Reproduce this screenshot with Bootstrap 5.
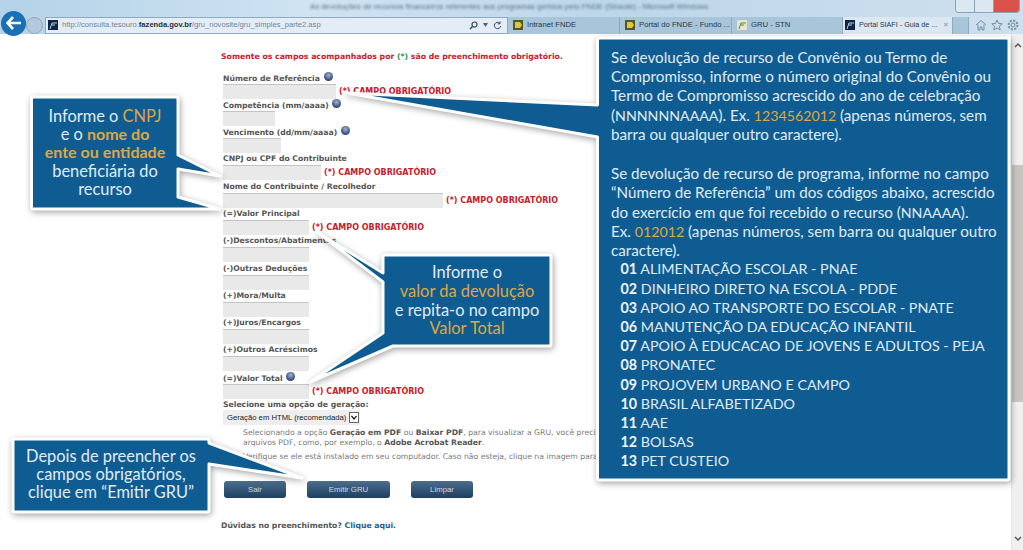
<!DOCTYPE html>
<html lang="pt-BR">
<head>
  <meta charset="UTF-8" />
  <meta name="viewport" content="width=device-width, initial-scale=1" />
  <title>GRU - Guia de preenchimento</title>
  <link href="https://cdn.jsdelivr.net/npm/bootstrap@5.3.3/dist/css/bootstrap.min.css" rel="stylesheet" />
  <style>
    html, body {
      height: 550px;
      overflow: hidden;
      background: #fff;
    }

    /* browser chrome */
    .ie-chrome {
      height: 34px;
      background: linear-gradient(to right, #b4d2e8, #cfe3f2 30%, #bcd6ea 60%, #cfe0ee);
      font-family: "Liberation Sans", sans-serif;
    }

    .ie-title { height: 16px; }

    .ie-title-text {
      margin-left: 310px;
      font-size: 7.800px;
      line-height: 14px;
      color: #5f7384;
      white-space: nowrap;
      filter: blur(1px);
    }

    .ie-btns {
      width: 65px;
      height: 13px;
      margin: 0 3px 0 auto;
      border: 1px solid #8ba3b6;
      border-top: 0;
      border-radius: 0 0 4px 4px;
      overflow: hidden;
    }

    .ie-btns span { flex: 1; background: #dbe7f1; border-right: 1px solid #8ba3b6; }
    .ie-btns span:last-child { flex: 1.4; background: #d9534a; border: 0; }

    .ie-bar { height: 18px; }

    .ie-back {
      flex: none;
      width: 25px;
      height: 25px;
      margin: -4px 0 0 1px;
      background: #1b6fb5;
      border-radius: 50%;
      position: relative;
      z-index: 1;
    }

    .ie-forward {
      flex: none;
      width: 17px;
      height: 17px;
      margin: 0 2px 0 0;
      background: #b5c9dc;
      border: 1px solid #8ba6bf;
      border-radius: 50%;
    }

    .ie-address {
      flex: none;
      width: 463px;
      height: 17px;
      padding: 0 5px 0 2px;
      background: #e4edf5;
      border: 1px solid #8ea9c0;
      font-size: 7.600px;
      color: #6f8598;
    }

    .ie-address b { color: #1f2f3d; }
    .ie-address-tools { margin-left: auto; gap: 5px; }

    .ie-tab {
      flex: none;
      height: 17px;
      padding: 0 5px;
      font-size: 7.700px;
      color: #25384a;
      background: #a9c5da;
      border-right: 1px solid #8ea9c0;
      white-space: nowrap;
      overflow: hidden;
    }

    .ie-tab.on { padding: 0 2px; font-size: 7.200px; background: #dbe8f2; }
    .ie-tab .tab-x { color: #8b98a4; margin-left: 6px; font-size: 7px; }
    .ie-fav { width: 10px; height: 10px; margin-right: 4px; flex: none; }
    .ie-tools { width: 48px; margin: 0 2px 0 auto; }

    /* the form */
    .gru-page {
      height: 516px;
      padding: 17px 0 0 223px;
      font-family: "DejaVu Sans", Verdana, sans-serif;
      font-size: 7.700px;
      line-height: 11px;
      color: #555;
    }

    .gru-page b, .gru-page label { font-weight: 700; }
    .gru-warn { color: #c8202e; font-size: 7.750px; font-weight: 700; height: 20.500px; margin: 0 0 0 -2px; }
    .gru-warn span { color: #2f8f4f; }

    .gru-field { height: 27.300px; }
    .gru-field label { display: block; height: 12px; margin: 0; white-space: nowrap; }
    .gru-input { height: 15px; background: #e9e9e9; border-top: 1px solid #c4c4c4; flex: none; }
    .gru-req { color: #c8202e; font-size: 8px; font-weight: 700; margin: 2px 0 0 3px; white-space: nowrap; }

    .gru-dot {
      display: inline-block;
      width: 9px;
      height: 9px;
      margin-left: 1px;
      border-radius: 50%;
      background: radial-gradient(circle at 50% 35%, #9fb3d6, #2d3f70 75%);
      vertical-align: 0;
    }

    .gru-select {
      width: 137px;
      height: 15px;
      padding: 0 0 0 4px;
      background: #eeeeee;
      font-family: "Liberation Sans", sans-serif;
      font-size: 7.700px;
      color: #222;
      white-space: nowrap;
    }

    .gru-arrow {
      flex: none;
      width: 10px;
      height: 11px;
      margin-left: 3px;
      background: #fff;
      border: 1px solid #666;
    }

    .gru-help {
      width: 355px;
      margin: 3px 0 0 20px;
      line-height: 9.500px;
      color: #7a7a7a;
      white-space: nowrap;
      overflow: hidden;
    }

    .gru-help b { color: #555; }
    .gru-help p { margin: 0 0 5px; }

    .gru-btn {
      width: 62px;
      height: 17px;
      padding: 0;
      border: 0;
      border-radius: 3px;
      background: linear-gradient(#4d6d8c, #1c3f62);
      font-family: "Liberation Sans", sans-serif;
      font-size: 7.800px;
      line-height: 17px;
      color: #cfd9e2;
    }

    .gru-btn.wide { width: 83px; }
    .gru-actions { gap: 21px; margin: 14.500px 0 0 1px; }
    .gru-doubt { margin: 21.500px 0 0 -2px; font-weight: 700; }
    .gru-doubt a { color: #1f5f8f; text-decoration: none; }

    /* scrollbar */
    .fake-scroll {
      position: absolute;
      top: 34px;
      right: 0;
      width: 12px;
      height: 516px;
      background: #f0f0f0;
      border-left: 1px solid #e6e2e0;
    }

    .fake-thumb {
      height: 237px;
      margin-top: 117px;
      background: #c8c4c2;
    }

    /* callouts */
    .callout-art { position: absolute; inset: 0; pointer-events: none; }
    .callout-art path { fill: #0e5c92; stroke: #fff; stroke-width: 3; stroke-linejoin: round; filter: drop-shadow(1px 2px 3px rgba(0, 0, 0, .35)); }

    .callout-text {
      position: absolute;
      font-family: Lato, "Open Sans", sans-serif;
      color: #e0ecf4;
      font-size: 15.200px;
      line-height: 19.230px;
    }

    .callout-text em { font-style: normal; color: #dfa743; }
    .callout-text strong { font-weight: 700; color: #eef5f9; }
    .callout-text p { margin: 0; }
    .callout-center { text-align: center; display: flex; flex-direction: column; justify-content: center; font-size: 16.400px; }
    .callout-center em.heavy { font-size: 16px; font-weight: 700; }
    .caps-tight { font-size: 14.200px; }

    .tip-cnpj { left: 32px; top: 97px; width: 146px; height: 111px; line-height: 18.300px; }
    .tip-valor { left: 383px; top: 255px; width: 168px; height: 91px; line-height: 18.800px; }
    .tip-emitir { left: 13px; top: 437px; width: 196px; height: 73px; line-height: 18px; }
    .tip-ref { left: 611px; top: 48px; width: 396px; }
    .tip-ref ol { list-style: none; margin: -1px 0 0; padding: 0 0 0 9.500px; font-size: 14.300px; line-height: 19.200px; }
  </style>
</head>
<body class="position-relative">
  <header class="ie-chrome">
    <div class="ie-title d-flex">
      <div class="ie-title-text">As devoluções de recursos financeiros referentes aos programas geridos pelo FNDE (Sinsole) - Microsoft Windows</div>
      <div class="ie-btns d-flex"><span></span><span></span><span></span></div>
    </div>
    <div class="ie-bar d-flex align-items-center">
      <div class="ie-back d-flex align-items-center justify-content-center">
        <svg width="16" height="14" viewBox="0 0 16 14"><path d="M7 1 1.500 7 7 13M2 7h13" fill="none" stroke="#fff" stroke-width="2.600"/></svg>
      </div>
      <div class="ie-forward"></div>
      <div class="ie-address d-flex align-items-center">
        <svg class="ie-fav" viewBox="0 0 10 10"><rect width="10" height="10" fill="#12204f"/><path d="M2 9 4 3h5M4 5h3" fill="none" stroke="#9fe0c0"/></svg>
        <span>http://consulta.tesouro.<b>fazenda.gov.br</b>/gru_novosite/gru_simples_parte2.asp</span>
        <span class="ie-address-tools d-flex align-items-center">
          <svg width="9" height="9" viewBox="0 0 9 9"><circle cx="5.500" cy="3.500" r="2.500" fill="none" stroke="#33495c" stroke-width="1.200"/><path d="M3.500 5.500 1 8" stroke="#33495c" stroke-width="1.400"/></svg>
          <svg width="5" height="4" viewBox="0 0 5 4"><path d="M0 0h5L2.500 4z" fill="#4d6275"/></svg>
          <svg width="9" height="9" viewBox="0 0 9 9"><path d="M6.800 2.200A3.200 3.200 0 1 0 7.700 5M7 .5v2.300H4.700" fill="none" stroke="#33495c"/></svg>
        </span>
      </div>
      <div class="ie-tab d-flex align-items-center" style="width: 112px">
        <svg class="ie-fav" viewBox="0 0 10 10"><rect width="10" height="10" fill="#4c5c26"/><path d="M2 2h5l2 3-2 3H2z" fill="#e4c04a"/></svg>Intranet FNDE
      </div>
      <div class="ie-tab d-flex align-items-center" style="width: 112px">
        <svg class="ie-fav" viewBox="0 0 10 10"><rect width="10" height="10" fill="#4c5c26"/><path d="M2 2h5l2 3-2 3H2z" fill="#e4c04a"/></svg>Portal do FNDE - Fundo ...
      </div>
      <div class="ie-tab d-flex align-items-center" style="width: 111px">
        <svg class="ie-fav" viewBox="0 0 10 10"><rect width="10" height="10" fill="#e8e4c8"/><path d="M2 9 4 3h5M4 5h3" fill="none" stroke="#4f8a5a"/></svg>GRU - STN
      </div>
      <div class="ie-tab on d-flex align-items-center" style="width: 110px">
        <svg class="ie-fav" viewBox="0 0 10 10"><rect width="10" height="10" fill="#12204f"/><path d="M2 9 4 3h5M4 5h3" fill="none" stroke="#9fe0c0"/></svg>Portal SIAFI - Guia de ...<span class="tab-x">✕</span>
      </div>
      <div class="ie-tab" style="width: 16px"></div>
      <div class="ie-tools d-flex justify-content-around">
        <svg width="12" height="12" viewBox="0 0 12 12"><path d="M1 6 6 1.500 11 6M3 5.500V11h2V8h2v3h2V5.500" fill="none" stroke="#6f8fa9"/></svg>
        <svg width="12" height="12" viewBox="0 0 12 12"><path d="m6 1 1.500 3.400 3.700.4-2.800 2.400.8 3.600L6 9l-3.200 1.800.8-3.600L.8 4.800l3.700-.4z" fill="none" stroke="#6f8fa9"/></svg>
        <svg width="12" height="12" viewBox="0 0 12 12"><circle cx="6" cy="6" r="2" fill="none" stroke="#6f8fa9"/><circle cx="6" cy="6" r="4.400" fill="none" stroke="#6f8fa9" stroke-dasharray="2 1.400" stroke-width="2"/></svg>
      </div>
    </div>
  </header>

  <main class="gru-page">
    <p class="gru-warn">Somente os campos acompanhados por <span>(*)</span> são de preenchimento obrigatório.</p>

    <div class="gru-field">
      <label>Número de Referência <i class="gru-dot"></i></label>
      <div class="d-flex"><div class="gru-input" style="width: 113px"></div><div class="gru-req">(*) CAMPO OBRIGATÓRIO</div></div>
    </div>
    <div class="gru-field">
      <label>Competência (mm/aaaa) <i class="gru-dot"></i></label>
      <div class="gru-input" style="width: 52px"></div>
    </div>
    <div class="gru-field">
      <label>Vencimento (dd/mm/aaaa) <i class="gru-dot"></i></label>
      <div class="gru-input" style="width: 58px"></div>
    </div>
    <div class="gru-field">
      <label>CNPJ ou CPF do Contribuinte</label>
      <div class="d-flex"><div class="gru-input" style="width: 98px"></div><div class="gru-req">(*) CAMPO OBRIGATÓRIO</div></div>
    </div>
    <div class="gru-field">
      <label>Nome do Contribuinte / Recolhedor</label>
      <div class="d-flex"><div class="gru-input" style="width: 220px"></div><div class="gru-req">(*) CAMPO OBRIGATÓRIO</div></div>
    </div>
    <div class="gru-field">
      <label>(=)Valor Principal</label>
      <div class="d-flex"><div class="gru-input" style="width: 86px"></div><div class="gru-req">(*) CAMPO OBRIGATÓRIO</div></div>
    </div>
    <div class="gru-field">
      <label>(-)Descontos/Abatimentos</label>
      <div class="gru-input" style="width: 86px"></div>
    </div>
    <div class="gru-field">
      <label>(-)Outras Deduções</label>
      <div class="gru-input" style="width: 86px"></div>
    </div>
    <div class="gru-field">
      <label>(+)Mora/Multa</label>
      <div class="gru-input" style="width: 86px"></div>
    </div>
    <div class="gru-field">
      <label>(+)Juros/Encargos</label>
      <div class="gru-input" style="width: 86px"></div>
    </div>
    <div class="gru-field">
      <label>(+)Outros Acréscimos</label>
      <div class="gru-input" style="width: 86px"></div>
    </div>
    <div class="gru-field">
      <label>(=)Valor Total <i class="gru-dot"></i></label>
      <div class="d-flex"><div class="gru-input" style="width: 86px"></div><div class="gru-req">(*) CAMPO OBRIGATÓRIO</div></div>
    </div>

    <label class="d-block">Selecione uma opção de geração:</label>
    <div class="gru-select d-flex align-items-center">Geração em HTML (recomendada)
      <span class="gru-arrow d-flex align-items-center justify-content-center"><svg width="6" height="5" viewBox="0 0 6 5"><path d="M.5 1 3 4l2.500-3" fill="none" stroke="#222" stroke-width="1.300"/></svg></span>
    </div>

    <div class="gru-help">
      <p>Selecionando a opção <b>Geração em PDF</b> ou <b>Baixar PDF</b>, para visualizar a GRU, você precisa de um leitor de<br>arquivos PDF, como, por exemplo, o <b>Adobe Acrobat Reader</b>.</p>
      <p>Verifique se ele está instalado em seu computador. Caso não esteja, clique na imagem para instalar.</p>
    </div>

    <div class="gru-actions d-flex">
      <button type="button" class="gru-btn">Sair</button>
      <button type="button" class="gru-btn wide">Emitir GRU</button>
      <button type="button" class="gru-btn">Limpar</button>
    </div>

    <p class="gru-doubt">Dúvidas no preenchimento? <a href="#">Clique aqui.</a></p>
  </main>

  <div class="fake-scroll d-flex flex-column align-items-stretch">
    <svg class="mt-2 align-self-center" width="8" height="6" viewBox="0 0 8 6"><path d="M1 5 4 2l3 3" fill="none" stroke="#555" stroke-width="1.500"/></svg>
    <div class="fake-thumb"></div>
    <svg class="mt-auto mb-2 align-self-center" width="8" height="6" viewBox="0 0 8 6"><path d="M1 1l3 3 3-3" fill="none" stroke="#555" stroke-width="1.500"/></svg>
  </div>

  <!-- callout boxes and their tails -->
  <svg class="callout-art" width="1023" height="550" viewBox="0 0 1023 550">
    <path d="M597.500 40q0-2 2-2H1007q2 0 2 2V478q0 2-2 2H599.500q-2 0-2-2V137L347 93l250.500 12z"/>
    <path d="M33.500 97H176q2 0 2 2V155l42 21-42-7V197l42 12H33.500q-2 0-2-2V99q0-2 2-2z"/>
    <path d="M385 255H549q2 0 2 2V344q0 2-2 2H393L310 382l73-49V282L317 232l66 41V257q0-2 2-2z"/>
    <path d="M15 439H207q2 0 2 2V443L302 478l-93-14V510q0 2-2 2H15q-2 0-2-2V441q0-2 2-2z"/>
  </svg>

  <div class="callout-text callout-center tip-cnpj">
    <p>Informe o <em>CNPJ</em><br>e o <em class="heavy">nome do<br>ente ou entidade</em><br>beneficiária do<br>recurso</p>
  </div>
  <div class="callout-text callout-center tip-valor">
    <p>Informe o<br><em>valor da devolução</em><br>e repita-o no campo<br><em>Valor Total</em></p>
  </div>
  <div class="callout-text callout-center tip-emitir">
    <p>Depois de preencher os<br>campos obrigatórios,<br>clique em “Emitir GRU”</p>
  </div>
  <div class="callout-text tip-ref">
    <p>Se devolução de recurso de Convênio ou Termo de<br>Compromisso, informe o número original do Convênio ou<br>Termo de Compromisso acrescido do ano de celebração<br>(<span class="caps-tight">NNNNNNAAAA</span>). Ex. <em class="caps-tight">1234562012</em> (apenas números, sem<br>barra ou qualquer outro caractere).</p>
    <p class="mt-3 pt-1">Se devolução de recurso de programa, informe no campo<br>“Número de Referência” um dos códigos abaixo, acrescido<br>do exercício em que foi recebido o recurso (<span class="caps-tight">NNAAAA</span>).<br>Ex. <em class="caps-tight">012012</em> (apenas números, sem barra ou qualquer outro<br>caractere).</p>
    <ol>
      <li><strong>01</strong> ALIMENTAÇÃO ESCOLAR - PNAE</li>
      <li><strong>02</strong> DINHEIRO DIRETO NA ESCOLA - PDDE</li>
      <li><strong>03</strong> APOIO AO TRANSPORTE DO ESCOLAR - PNATE</li>
      <li><strong>06</strong> MANUTENÇÃO DA EDUCAÇÃO INFANTIL</li>
      <li><strong>07</strong> APOIO À EDUCACAO DE JOVENS E ADULTOS - PEJA</li>
      <li><strong>08</strong> PRONATEC</li>
      <li><strong>09</strong> PROJOVEM URBANO E CAMPO</li>
      <li><strong>10</strong> BRASIL ALFABETIZADO</li>
      <li><strong>11</strong> AAE</li>
      <li><strong>12</strong> BOLSAS</li>
      <li><strong>13</strong> PET CUSTEIO</li>
    </ol>
  </div>

  <script src="https://cdn.jsdelivr.net/npm/bootstrap@5.3.3/dist/js/bootstrap.bundle.min.js"></script>
</body>
</html>
